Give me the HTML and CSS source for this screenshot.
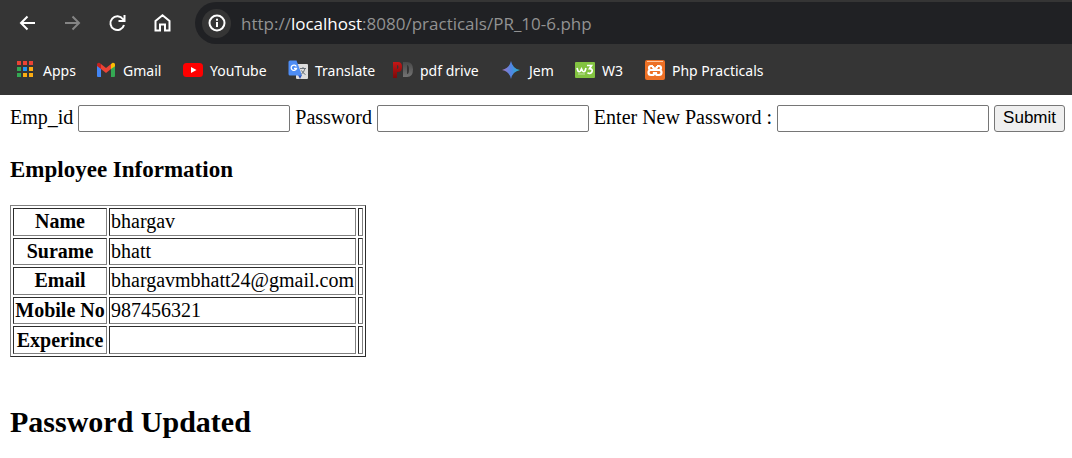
FILE: index.html
```
<!DOCTYPE html>
<html lang="en">
<head>
<meta charset="utf-8">
<title>PR_10-6</title>
<link rel="stylesheet" href="styles.css">
</head>
<body>
<header class="browser">
  <div class="toolbar">
    <nav class="controls" aria-label="Navigation">
      <button class="tool" type="button" aria-label="Back"><svg width="20" height="20" viewBox="0 0 20 20"><path d="M18 10H4.500M10.500 3.500L4 10l6.500 6.500" fill="none" stroke="#fff" stroke-width="2"/></svg></button>
      <button class="tool" type="button" aria-label="Forward"><svg width="20" height="20" viewBox="0 0 20 20"><path d="M3 10H16.500M10.500 3.500L17 10l-6.500 6.500" fill="none" stroke="#858585" stroke-width="2"/></svg></button>
      <button class="tool" type="button" aria-label="Reload"><svg width="20" height="20" viewBox="0 0 20 20"><path d="M17 12A6.900 6.900 0 1 1 16 6.200L17 7.500M17.500 2v6h-6" fill="none" stroke="#fff" stroke-width="2"/></svg></button>
      <button class="tool" type="button" aria-label="Home"><svg width="20" height="20" viewBox="0 0 20 20"><path d="M3.500 17.500V8l7-5.700L17.500 8v9.500h-4.500v-6H8v6z" fill="none" stroke="#fff" stroke-width="2"/></svg></button>
    </nav>
    <div class="address">
      <button class="info" type="button" aria-label="Site information"><svg width="18" height="18" viewBox="0 0 18 18"><circle cx="9" cy="9" r="7.500" fill="none" stroke="#fff" stroke-width="2"/><path d="M9 8v5M9 4.800v2" stroke="#fff" stroke-width="2"/></svg></button>
      <span class="url">http://<span class="host">localhost</span>:8080/practicals/PR_10-6.php</span>
    </div>
  </div>
  <nav class="bookmarks" aria-label="Bookmarks">
    <a class="bookmark" href="#"><svg width="20" height="20" viewBox="0 0 20 20"><path d="M1 1h4v4H1zM7 1h4v4H7zM13 1h4v4h-4z" fill="#ea4335"/><path d="M1 7h4v4H1zM1 13h4v4H1z" fill="#34a853"/><path d="M7 7h4v4H7z" fill="#2196f3"/><path d="M13 7h4v4h-4zM7 13h4v4H7zM13 13h4v4h-4z" fill="#fbac12"/></svg><span>Apps</span></a>
    <a class="bookmark" href="#"><svg width="20" height="20" viewBox="0 0 20 20"><path d="M1 5l4 3v9H2q-1 0-1-1z" fill="#4285f4"/><path d="M15 8l4-3v11q0 1-1 1h-3z" fill="#34a853"/><path d="M15 4l1-.8c1.500-1 3 0 3 1.600v1.500L15 9z" fill="#fbbc04"/><path d="M5 4l5 4 5-4v5l-5 4-5-4z" fill="#ea4335"/><path d="M5 9L1 6V4.800c0-1.600 1.500-2.600 3-1.600L5 4z" fill="#c5221f"/></svg><span>Gmail</span></a>
    <a class="bookmark" href="#"><svg width="20" height="20" viewBox="0 0 20 20"><rect y="3" width="20" height="14" rx="3.500" fill="#f00"/><path d="M8 7l5.500 3L8 13z" fill="#fff"/></svg><span>YouTube</span></a>
    <a class="bookmark" href="#"><svg width="20" height="20" viewBox="0 0 20 20"><rect x="8" y="4" width="12" height="15" rx="1" fill="#ddd"/><path d="M10 15h4l-2 4z" fill="#3054b8"/><path d="M2 .500h6.500L14 15.500H2q-1.500 0-1.500-1.500V2Q.500.500 2 .500z" fill="#4e8df5"/><path d="M8.300 6.500A2.700 2.700 0 1 0 8.500 8.500H6" fill="none" stroke="#fff" stroke-width="1.300"/><path d="M12 8.500h6M15 7v1.500M17 8.500q-1 4-4 6M13.500 10.500q1.500 3 4 4" fill="none" stroke="#687078"/></svg><span>Translate</span></a>
    <a class="bookmark" href="#"><svg width="20" height="20" viewBox="0 0 20 20"><defs><linearGradient id="red" x2="0" y2="1"><stop stop-color="#c51616"/><stop offset="1" stop-color="#7c0909"/></linearGradient><linearGradient id="gray" x2="0" y2="1"><stop stop-color="#494949"/><stop offset="1" stop-color="#737373"/></linearGradient></defs><path fill-rule="evenodd" fill="url(#red)" d="M0 2h5q4 0 4 5t-4 5H4v6H0zM4 5v4q1.500 0 1.500-2T4 5z"/><path fill-rule="evenodd" fill="url(#gray)" d="M10 2h4q6 0 6 7.500T14 17h-4zM14 5v9q2 0 2-4.500T14 5z"/></svg><span>pdf drive</span></a>
    <a class="bookmark" href="#"><svg width="20" height="20" viewBox="0 0 20 20"><defs><linearGradient id="spark"><stop stop-color="#a477bd"/><stop offset=".5" stop-color="#5285e5"/><stop offset="1" stop-color="#20b5c8"/></linearGradient></defs><path d="M9 1Q10.500 8.500 18 10 10.500 11.500 9 19 7.500 11.500 0 10 7.500 8.500 9 1z" fill="url(#spark)"/></svg><span>Jem</span></a>
    <a class="bookmark" href="#"><svg width="20" height="20" viewBox="0 0 20 20"><rect y="2" width="20" height="16" rx="1" fill="#83c341"/><path d="M2 8l1 3q1 1.500 2.500 0L6.500 9l1 2q1.500 1.500 2.500 0l1-3M12 5.500h4.500l-2 3.200q3.500 0 2.500 3-2 3-4.500 1" fill="none" stroke="#fff" stroke-width="1.700"/><path d="M3 14h7" stroke="#c4e4a3"/></svg><span>W3</span></a>
    <a class="bookmark" href="#"><svg width="20" height="20" viewBox="0 0 20 20"><rect width="20" height="20" rx="2" fill="#ed7025"/><path d="M2 1.500h16" stroke="#ffc69d"/><path d="M8 6H6a2 2 0 0 0 0 4 2.500 2.500 0 0 0 0 5h1.500q1.500 0 1.500-1.500V12M12 6h2a2 2 0 0 1 0 4 2.500 2.500 0 0 1 0 5h-1.500Q11 15 11 13.500V12M6 10h8M8 6v1.500q2 2 4 0V6" fill="none" stroke="#fff" stroke-width="2.200"/></svg><span>Php Practicals</span></a>
  </nav>
</header>
<main class="page">
  <form class="login">
    <label for="emp">Emp_id</label>
    <input class="field" id="emp" type="text">
    <label for="password">Password</label>
    <input class="field" id="password" type="password">
    <label for="new-password">Enter New Password :</label>
    <input class="field" id="new-password" type="password">
    <button class="submit" type="button">Submit</button>
  </form>
  <h3 class="subtitle">Employee Information</h3>
  <table class="employee">
    <tr><th scope="row">Name</th><td>bhargav</td><td></td></tr>
    <tr><th scope="row">Surame</th><td>bhatt</td><td></td></tr>
    <tr><th scope="row">Email</th><td>bhargavmbhatt24@gmail.com</td><td></td></tr>
    <tr><th scope="row">Mobile No</th><td>987456321</td><td></td></tr>
    <tr><th scope="row">Experince</th><td></td><td></td></tr>
  </table>
  <h2 class="status">Password Updated</h2>
</main>
</body>
</html>
```
FILE: styles.css
```
* { box-sizing: border-box; }
body {
  margin: 0;
  background: #fff;
  color: #000;
  font: 20px/23px "Liberation Serif", "Times New Roman", serif;
}
.browser {
  padding: 2px 0 13px;
  background: #353535;
  font-family: "Noto Sans", "Open Sans", sans-serif;
  overflow: hidden;
}
.toolbar { display: flex; align-items: center; }
.controls { display: flex; gap: 25px; padding: 0 23px 0 17px; }
.tool, .info {
  display: flex;
  align-items: center;
  justify-content: center;
  padding: 0;
  border: 0;
  background: none;
}
.address {
  display: flex;
  flex: 1;
  align-items: center;
  gap: 10px;
  height: 42px;
  padding-left: 7px;
  border-radius: 21px 0 0 21px;
  background: #202124;
}
.info { width: 29px; height: 29px; border-radius: 50%; background: #353535; }
.url { color: #929292; font-family: "Open Sans", sans-serif; font-size: 17px; white-space: nowrap; }
.host { color: #fff; }
.bookmarks {
  display: grid;
  grid-template-columns: 80px 87px 105px 105px 109px 73px 70px auto;
  padding: 14px 0 0 16px;
}
.bookmark {
  display: flex;
  align-items: center;
  gap: 7px;
  height: 24px;
  color: #fff;
  font-size: 14px;
  text-decoration: none;
  white-space: nowrap;
}
.page { padding: 10px 7px 0 10px; }
.login { display: flex; align-items: center; gap: 5px; white-space: nowrap; }
.login label { padding-bottom: 2px; }
.field {
  flex: 1 1 0;
  min-width: 0;
  height: 27px;
  padding: 1px 2px;
  border: 1px solid #767676;
  border-radius: 2px;
  font-size: 17px;
}
.submit {
  height: 27px;
  padding: 0 8px 2px;
  border: 1px solid #767676;
  border-radius: 3px;
  background: #efefef;
  color: #000;
  font: 17px "Liberation Sans", Arial, sans-serif;
}
.subtitle { margin: 26px 0 24px; font-size: 23px; line-height: 23px; }
.employee {
  height: 152px;
  border: 1px solid;
  border-color: #808080 #2c2c2c #2c2c2c #808080;
  border-spacing: 2px;
}
.employee th, .employee td {
  padding: 1px;
  border: 1px solid;
  border-color: #2c2c2c #808080 #808080 #2c2c2c;
}
.employee th { min-width: 94px; }
.employee td:last-child { min-width: 5px; }
.status { margin: 48px 0 0; font-size: 30px; line-height: 34px; }
```
